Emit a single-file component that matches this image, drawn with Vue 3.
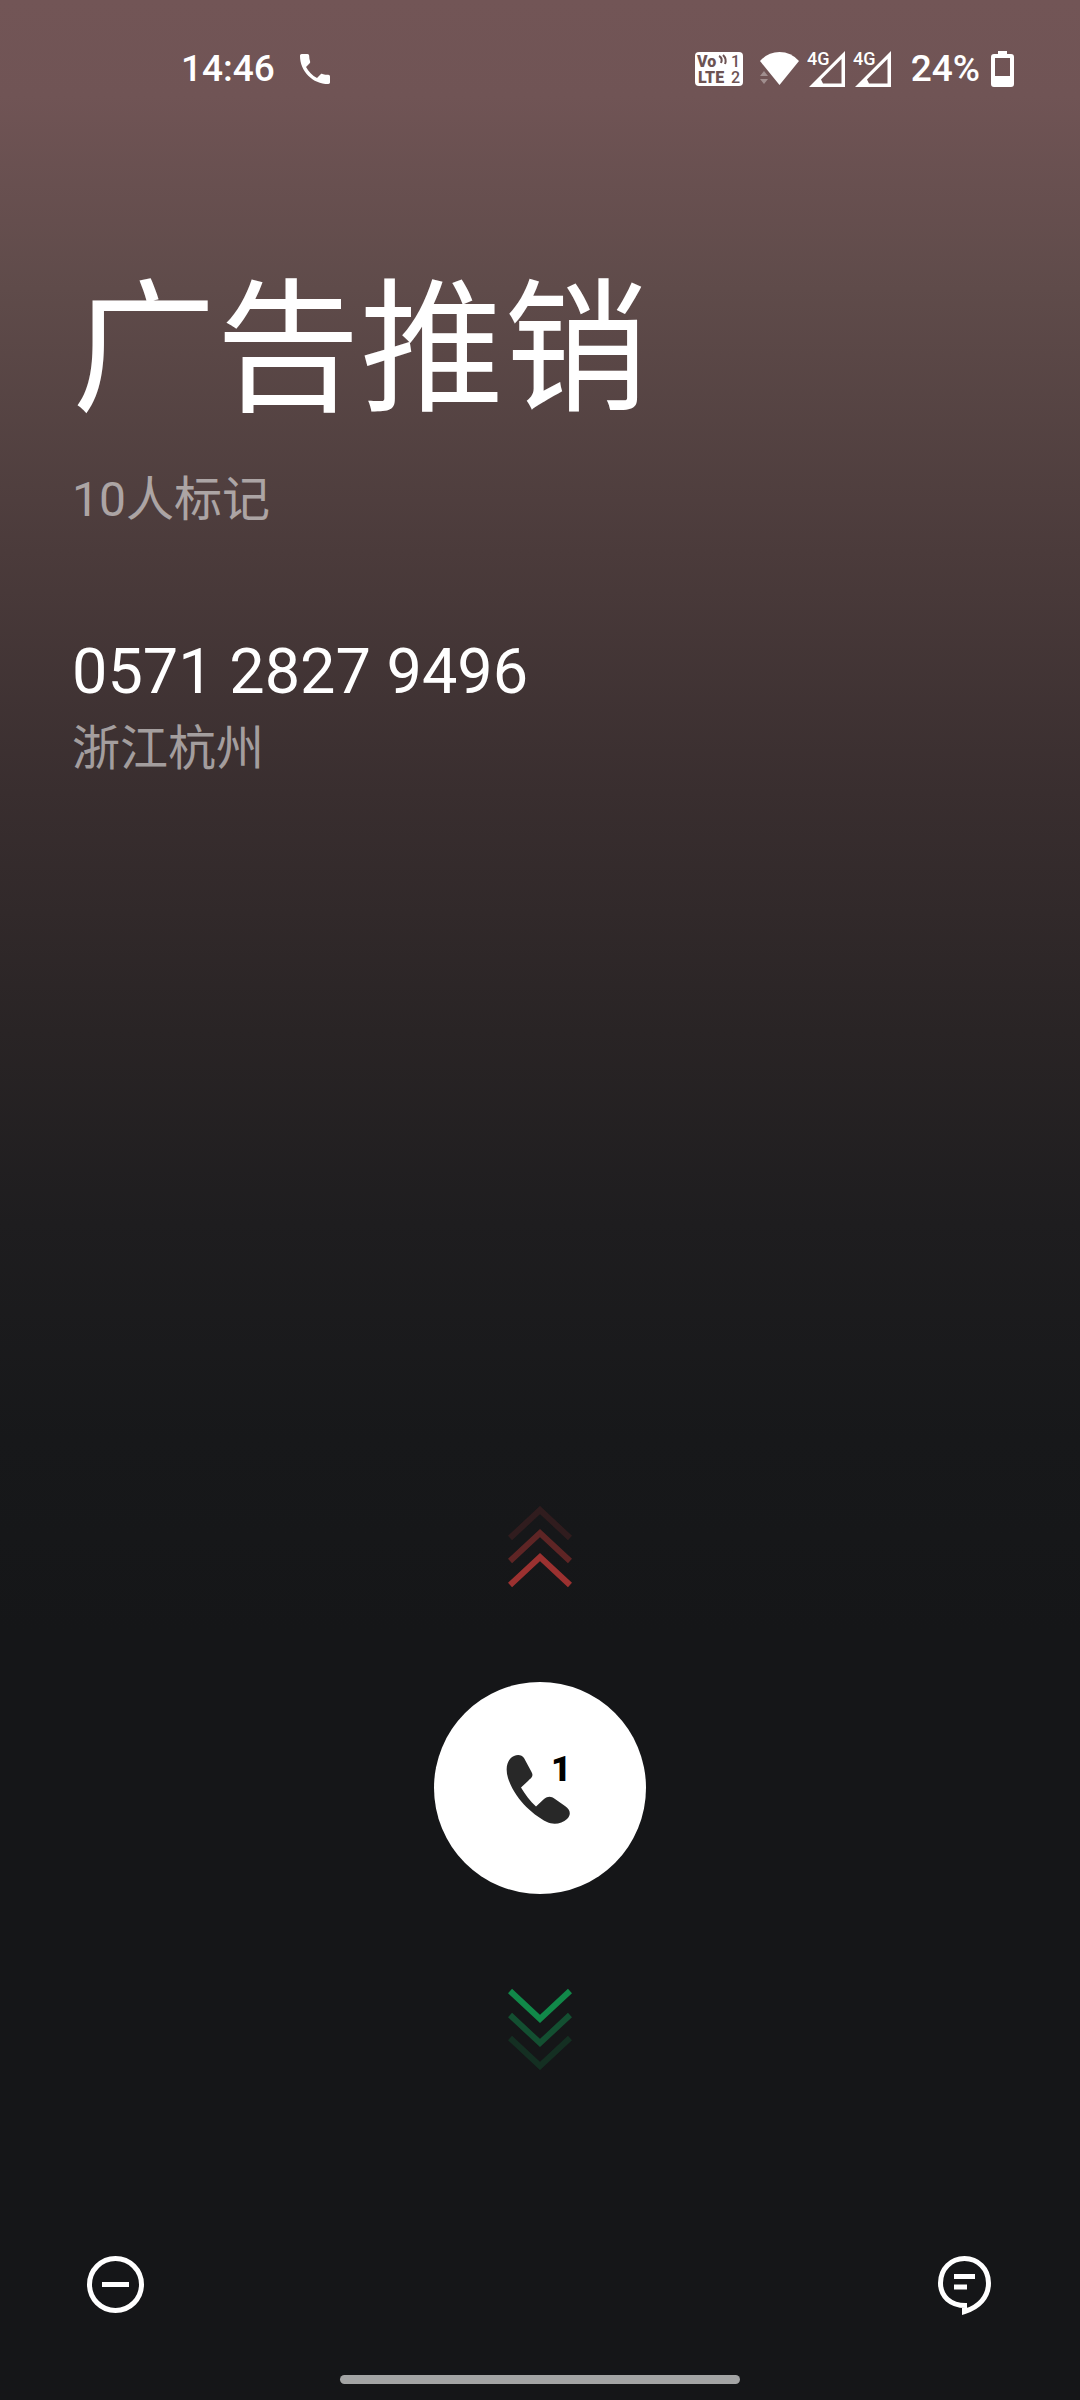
<script setup>
import { ref } from 'vue';

const caller = ref({
  label: '广告推销',
  marks: 10,
  number: '0571 2827 9496',
  location: '浙江杭州',
});

const signals = ['4G', '4G'];
const simSlot = 1;
</script>

<template>
  <main class="screen">
    <header class="status-bar">
      <div class="status-left">
        <span class="clock">14:46</span>
        <svg class="phone-icon" width="30" height="30" viewBox="3 3 18 18">
          <path
            d="M6.62 10.79c1.44 2.83 3.76 5.14 6.59 6.59l2.2-2.2c.27-.27.67-.36 1.02-.24 1.12.37 2.33.57 3.57.57.55 0 1 .45 1 1V20c0 .55-.45 1-1 1-9.39 0-17-7.61-17-17 0-.55.45-1 1-1h3.5c.55 0 1 .45 1 1 0 1.25.2 2.45.57 3.57.11.35.03.74-.25 1.02l-2.2 2.2z"
            fill="#fff"
          />
        </svg>
      </div>
      <div class="status-right">
        <svg class="volte-icon" width="48" height="42" viewBox="0 -4 48 42">
          <rect width="48" height="34" rx="4" fill="#fff" />
          <g class="volte-text" fill="#6d5353">
            <text x="2" y="15" class="heavy">Vo</text>
            <text x="3" y="31" class="heavy">LTE</text>
            <text x="36" y="15">1</text>
            <text x="36" y="31">2</text>
          </g>
          <path
            d="M24 4q4 2 2 7M28 3q4 4 2 9"
            fill="none"
            stroke="#6d5353"
            stroke-width="2"
          />
        </svg>
        <svg class="wifi-icon" width="39" height="34" viewBox="0 0 39 34">
          <path d="M0 9Q8 0 19.500 0T39 9L19.500 33z" fill="#fff" />
          <path d="M0 24L4 19L8 24zM0 27H8L4 32z" fill="#a08e8e" />
        </svg>
        <svg
          v-for="(signal, index) in signals"
          :key="index"
          class="signal-icon"
          width="38"
          height="48"
          viewBox="0 -6 38 48"
        >
          <path
            d="M2 36L38 0V36zM16 32.500H34.500V8L14 28.500z"
            fill="#fff"
            fill-rule="evenodd"
          />
          <path d="M0 -1H23V9L17 15H0z" fill="#6f5455" />
          <text x="0" y="14" class="signal-text" fill="#fff">{{ signal }}</text>
        </svg>
        <span class="battery-level">24%</span>
        <svg class="battery-icon" width="23" height="36" viewBox="0 0 23 36">
          <path
            d="M7 0H16V3H20a3 3 0 0 1 3 3V33a3 3 0 0 1-3 3H3a3 3 0 0 1-3-3V6a3 3 0 0 1 3-3H7zM4 7V25H19V7z"
            fill="#fff"
            fill-rule="evenodd"
          />
        </svg>
      </div>
    </header>

    <section class="caller">
      <h1 class="caller-label">{{ caller.label }}</h1>
      <p class="caller-marks">{{ caller.marks }}人标记</p>
      <p class="caller-number">{{ caller.number }}</p>
      <p class="caller-location">{{ caller.location }}</p>
    </section>

    <section class="answer">
      <svg class="chevrons" width="64" height="82" viewBox="0 0 64 82">
        <g fill="none" stroke="#9b3130" stroke-width="6">
          <path d="M2 32L32 4L62 32" opacity="0.2" />
          <path d="M2 55L32 27L62 55" opacity="0.55" />
          <path d="M2 79L32 51L62 79" />
        </g>
      </svg>
      <button class="answer-button" aria-label="接听">
        <svg width="84" height="90" viewBox="-8 -11 84 90">
          <path
            d="M2 24C-1 14 1 5 8 2C12 0 16 1 18 4L25 17C28 22 26 23 22 27L15 33.500C19 40 24 47 30 52.500L38 45C42 42 45 42 49 45L59 52C65 56 65 61 61 65C56 70 47 71 41 68C25 60 8 43 2 24z"
            fill="#282828"
          />
          <text x="45" y="27" class="sim-text" fill="#000">{{ simSlot }}</text>
        </svg>
      </button>
      <svg class="chevrons" width="64" height="82" viewBox="0 0 64 82">
        <g fill="none" stroke="#118849" stroke-width="6">
          <path d="M2 3L32 31L62 3" />
          <path d="M2 27L32 55L62 27" opacity="0.5" />
          <path d="M2 50L32 78L62 50" opacity="0.22" />
        </g>
      </svg>
    </section>

    <footer class="actions">
      <button class="action-button" aria-label="静音">
        <svg width="60" height="60" viewBox="0 0 60 60">
          <g fill="none" stroke="#fff" stroke-width="5">
            <circle cx="30.500" cy="28.500" r="26" />
            <path d="M17 28.500H44" />
          </g>
        </svg>
      </button>
      <button class="action-button" aria-label="短信回复">
        <svg width="60" height="60" viewBox="0 0 60 60">
          <g fill="none" stroke="#fff" stroke-width="5">
            <path
              d="M32 49.500C15 50 5.500 40 5.500 27C5.500 13 16 2.500 29.500 2.500C43 2.500 53.500 13 53.500 27C53.500 41 44 51 29.500 55.500V47"
            />
            <path d="M19 20.500H40M19 31H32" />
          </g>
        </svg>
      </button>
    </footer>

    <div class="home-bar"></div>
  </main>
</template>

<style>
body {
  background: #151618;
}
</style>

<style scoped>
.screen {
  display: flex;
  flex-direction: column;
  box-sizing: border-box;
  min-height: 100vh;
  padding-bottom: 16px;
  color: #fff;
  font-family: Roboto, 'Noto Sans CJK SC', sans-serif;
  background: linear-gradient(
    #725556 0%,
    #705455 4%,
    #5f4b4a 12%,
    #4b3b3b 23%,
    #392e2f 33%,
    #292425 43%,
    #1e1d1f 51%,
    #17181a 60%,
    #151618 68%,
    #151618 100%
  );
}
.status-bar {
  display: flex;
  justify-content: space-between;
  align-items: center;
  height: 138px;
  padding: 0 66px 0 181px;
}
.status-left,
.status-right {
  display: flex;
  align-items: center;
}
.clock,
.battery-level {
  font-size: 37px;
  font-weight: 500;
  line-height: 40px;
}
.phone-icon {
  margin-left: 25px;
}
.volte-text {
  font-size: 16px;
  font-weight: 500;
}
.heavy {
  font-weight: 900;
}
.wifi-icon {
  margin-left: 17px;
}
.signal-icon {
  margin-left: 8px;
}
.signal-text {
  font-size: 18px;
  font-weight: 500;
}
.battery-level {
  margin: 0 11px 0 20px;
}
.caller {
  padding: 129px 72px 0;
}
.caller-label,
.caller-marks,
.caller-number,
.caller-location {
  margin: 0;
  font-weight: 400;
}
.caller-label {
  font-size: 144px;
  line-height: 168px;
}
.caller-marks {
  margin-top: 33px;
  font-size: 48px;
  line-height: 64px;
  color: rgba(255, 255, 255, 0.54);
}
.caller-number {
  margin-top: 100px;
  font-size: 63px;
  line-height: 80px;
}
.caller-location {
  margin-top: 5px;
  font-size: 48px;
  line-height: 64px;
  color: rgba(255, 255, 255, 0.54);
}
.answer {
  display: flex;
  flex-direction: column;
  align-items: center;
  gap: 94px;
  margin-top: auto;
}
.answer-button {
  display: flex;
  justify-content: center;
  align-items: center;
  width: 212px;
  height: 212px;
  padding: 0;
  border: none;
  border-radius: 50%;
  background: #fff;
}
.sim-text {
  font-family: Roboto, sans-serif;
  font-size: 35px;
  font-weight: 900;
}
.actions {
  display: flex;
  justify-content: space-between;
  margin-top: 186px;
  padding: 0 85px;
}
.action-button {
  display: flex;
  padding: 0;
  border: none;
  background: none;
}
.home-bar {
  align-self: center;
  width: 37%;
  height: 9px;
  margin-top: 59px;
  border-radius: 5px;
  background: #a3a4a4;
}
</style>
